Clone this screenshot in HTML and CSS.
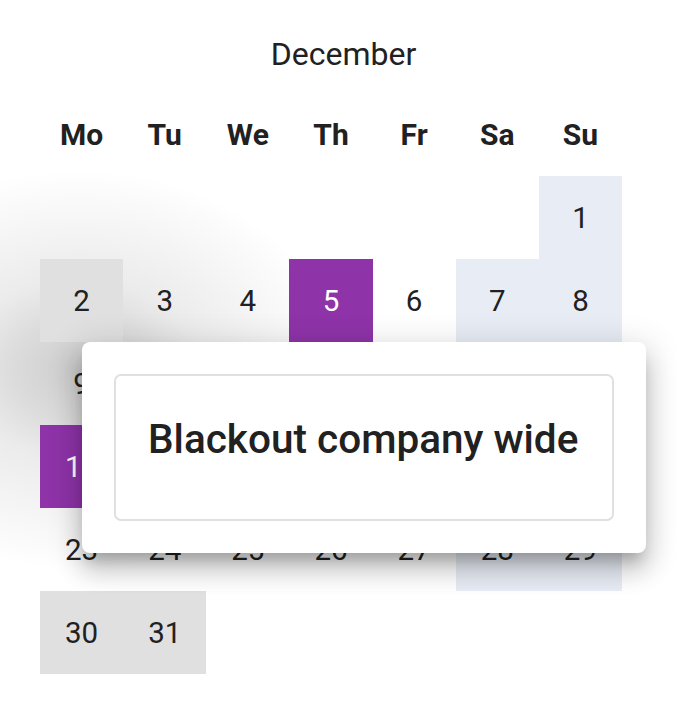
FILE: index.html
```html
<!DOCTYPE html>
<html lang="en">
<head>
<meta charset="utf-8">
<title>December</title>
<link rel="stylesheet" href="styles.css">
</head>
<body>
<div class="page">
  <div class="blob"></div>
  <div class="calendar">
    <div class="title">December</div>
    <div class="weekdays">
      <div class="wd">Mo</div><div class="wd">Tu</div><div class="wd">We</div><div class="wd">Th</div><div class="wd">Fr</div><div class="wd">Sa</div><div class="wd">Su</div>
    </div>
    <div class="days">
      <div class="day"></div><div class="day"></div><div class="day"></div><div class="day"></div><div class="day"></div><div class="day"></div><div class="day weekend">1</div>
      <div class="day past">2</div><div class="day">3</div><div class="day">4</div><div class="day blackout">5</div><div class="day">6</div><div class="day weekend">7</div><div class="day weekend">8</div>
      <div class="day">9</div><div class="day">10</div><div class="day">11</div><div class="day">12</div><div class="day">13</div><div class="day weekend">14</div><div class="day weekend">15</div>
      <div class="day blackout">16</div><div class="day">17</div><div class="day">18</div><div class="day">19</div><div class="day">20</div><div class="day weekend">21</div><div class="day weekend">22</div>
      <div class="day">23</div><div class="day">24</div><div class="day">25</div><div class="day">26</div><div class="day">27</div><div class="day weekend">28</div><div class="day weekend">29</div>
      <div class="day past">30</div><div class="day past">31</div>
    </div>
  </div>
  <div class="popover">
    <div class="popover-box">Blackout company wide</div>
  </div>
</div>
</body>
</html>
```
FILE: styles.css
```css
html, body {
  margin: 0;
  padding: 0;
  background: #ffffff;
}
body {
  font-family: Roboto, "Liberation Sans", sans-serif;
  color: #212121;
}
.page {
  position: relative;
  width: 676px;
  height: 712px;
  overflow: hidden;
}
.blob {
  position: absolute;
  left: -180px;
  top: 170px;
  width: 520px;
  height: 400px;
  background: radial-gradient(ellipse 260px 200px at 260px 200px,
    rgba(0,0,0,0.20) 0%,
    rgba(0,0,0,0.14) 25%,
    rgba(0,0,0,0.08) 45%,
    rgba(0,0,0,0.045) 70%,
    rgba(0,0,0,0.015) 90%,
    rgba(0,0,0,0) 100%);
  z-index: 0;
}
.calendar {
  position: relative;
  z-index: 1;
  padding-left: 40px;
}
.title {
  width: 607px;
  height: 93px;
  box-sizing: border-box;
  padding-top: 15px;
  display: flex;
  align-items: center;
  justify-content: center;
  font-size: 32px;
  font-weight: 400;
}
.weekdays, .days {
  width: 582px;
  display: grid;
  grid-template-columns: repeat(7, 1fr);
}
.weekdays {
  height: 83px;
}
.days {
  grid-auto-rows: 83px;
}
.wd {
  display: flex;
  align-items: center;
  justify-content: center;
  font-size: 30px;
  font-weight: 700;
}
.day {
  display: flex;
  align-items: center;
  justify-content: center;
  font-size: 29.5px;
  font-weight: 400;
}
.weekend {
  background: #e8edf5;
}
.past {
  background: #e0e0e0;
}
.blackout {
  background: #8e33a8;
  color: #ffffff;
}
.popover {
  position: absolute;
  z-index: 2;
  left: 82px;
  top: 342px;
  width: 564px;
  height: 211px;
  box-sizing: border-box;
  padding: 32px;
  background: #ffffff;
  border-radius: 8px;
  box-shadow: 0 12px 14px -6px rgba(0,0,0,0.2),
              0 18px 24px 2px rgba(0,0,0,0.14),
              0 6px 32px 6px rgba(0,0,0,0.12);
}
.popover-box {
  height: 147px;
  box-sizing: border-box;
  border: 2px solid #e0e0e0;
  border-radius: 7px;
  padding: 0 0 17px 32px;
  display: flex;
  align-items: center;
  font-size: 40.5px;
  font-weight: 500;
  white-space: nowrap;
}
```
